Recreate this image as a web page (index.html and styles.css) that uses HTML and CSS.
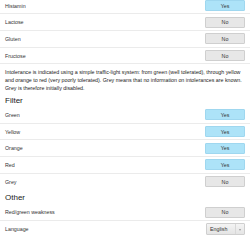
FILE: index.html
```html
<!DOCTYPE html>
<html>
<head>
<meta charset="utf-8">
<link rel="stylesheet" href="styles.css">
</head>
<body>
<div class="page">
  <div class="group first">
    <div class="row"><span class="label">Histamin</span><span class="btn on">Yes</span></div>
    <div class="row"><span class="label">Lactose</span><span class="btn off">No</span></div>
    <div class="row"><span class="label">Gluten</span><span class="btn off">No</span></div>
    <div class="row"><span class="label">Fructose</span><span class="btn off">No</span></div>
  </div>
  <p class="note">Intolerance is indicated using a simple traffic-light system: from green (well tolerated), through yellow and orange to red (very poorly tolerated). Grey means that no information on intolerances are known. Grey is therefore initially disabled.</p>
  <h2 class="heading">Filter</h2>
  <div class="group">
    <div class="row"><span class="label">Green</span><span class="btn on">Yes</span></div>
    <div class="row"><span class="label">Yellow</span><span class="btn on">Yes</span></div>
    <div class="row"><span class="label">Orange</span><span class="btn on">Yes</span></div>
    <div class="row"><span class="label">Red</span><span class="btn on">Yes</span></div>
    <div class="row"><span class="label">Grey</span><span class="btn off">No</span></div>
  </div>
  <h2 class="heading">Other</h2>
  <div class="group">
    <div class="row"><span class="label">Red/green weakness</span><span class="btn off">No</span></div>
    <div class="row"><span class="label">Language</span><span class="select"><span class="sel-text">English</span><span class="sel-arrow"></span></span></div>
  </div>
</div>
</body>
</html>
```
FILE: styles.css
```css
html, body {
  margin: 0;
  padding: 0;
  background: #ffffff;
}
body {
  font-family: "Liberation Sans", Arial, sans-serif;
  color: #333333;
  overflow: hidden;
}
.page {
  width: 250px;
}
.group.first {
  margin-top: -2.35px;
}
.row {
  display: flex;
  align-items: center;
  justify-content: space-between;
  padding: 2.35px 5px;
  border-bottom: 1px solid #ebebeb;
}
.group .row:last-child {
  border-bottom: none;
}
.group.first .row:last-child {
  border-bottom: 1px solid #ebebeb;
}
.label {
  font-size: 5.3px;
  color: #333;
}
.btn {
  box-sizing: border-box;
  width: 40px;
  height: 11px;
  display: flex;
  align-items: center;
  justify-content: center;
  font-size: 5.3px;
  border-radius: 1px;
  color: #333;
}
.btn.on {
  background: #ade3f8;
  border: 0.5px solid #9fd7ef;
}
.btn.off {
  background: #e7e7e7;
  border: 0.5px solid #cfcfcf;
}
.note {
  margin: 3.2px 5px 0;
  font-size: 5.3px;
  line-height: 8.2px;
  color: #222;
}
.heading {
  margin: 3.5px 5px 1.3px;
  font-size: 8px;
  line-height: 10px;
  font-weight: normal;
  color: #222;
}
.select {
  box-sizing: border-box;
  width: 39px;
  height: 11.5px;
  display: flex;
  align-items: stretch;
  border: 0.5px solid #cfcfcf;
  border-radius: 1px;
  background: linear-gradient(#f4f4f4, #e4e4e4);
}
.sel-text {
  flex: 1;
  display: flex;
  align-items: center;
  padding-left: 3px;
  font-size: 5.3px;
  color: #333;
}
.sel-arrow {
  width: 8px;
  border-left: 0.5px solid #d8d8d8;
  position: relative;
}
.sel-arrow::after {
  content: "";
  position: absolute;
  left: 2.5px;
  top: 4.5px;
  border-left: 1.5px solid transparent;
  border-right: 1.5px solid transparent;
  border-top: 2px solid #999;
}
```
